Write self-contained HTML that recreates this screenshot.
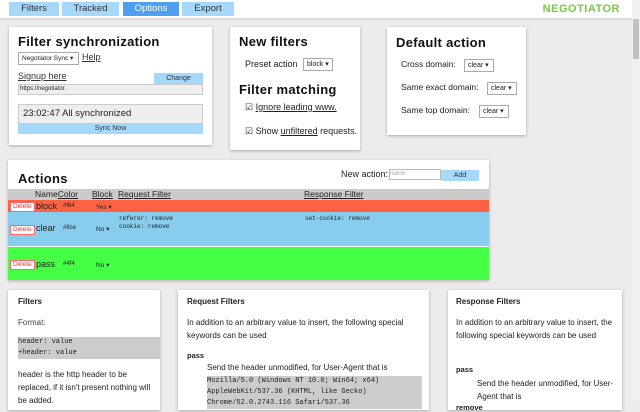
<!DOCTYPE html>
<html><head><style>
*{box-sizing:border-box;margin:0;padding:0}
body{width:640px;height:400px;overflow:hidden;background:#ececec;font-family:"Liberation Sans",sans-serif;font-size:9px;color:#222;position:relative}
.hdr{position:absolute;left:0;top:0;width:632px;height:18px;background:#fff;box-shadow:0 1px 2px #ccc}
.tab{position:absolute;top:2px;height:14px;background:#a6d8fb;color:#333;font-size:9.5px;text-align:center;line-height:14px}
.logo{position:absolute;right:12px;top:3px;color:#7ac943;font-weight:bold;font-size:11px;letter-spacing:.5px}
.card{position:absolute;background:#fff;box-shadow:0 1px 3px #aaa}
h2{font-size:13px;font-weight:bold;letter-spacing:.3px;color:#111}
h3{font-size:10px;font-weight:bold}
.sel{display:inline-block;border:1px solid #aaa;height:13px;font-size:7px;line-height:11px;padding:0 3px;background:#fff;position:absolute}
.btn{position:absolute;background:#a6d8fb;text-align:center;font-size:7px;line-height:12px;color:#333}
a{color:#333;text-decoration:underline}
.sb{position:absolute;left:632px;top:0;width:8px;height:400px;background:#f1f1f1}
.sb div{position:absolute;left:1px;top:19px;width:6px;height:40px;background:#c1c1c1}
.row{position:absolute;left:8px;width:481px}
.del{position:absolute;left:2px;background:#fff;border:1px solid #f66;color:#e33;font-size:6.5px;padding:0 2px;line-height:8px}
.mono{font-family:"Liberation Mono",monospace;font-size:7px}
.t{position:absolute}
</style></head><body>
<div class="hdr">
<div class="tab" style="left:9px;width:50px">Filters</div>
<div class="tab" style="left:62px;width:57px">Tracked</div>
<div class="tab" style="left:123px;width:56px;background:#4f9ff0;color:#fff">Options</div>
<div class="tab" style="left:182px;width:52px">Export</div>
<div class="logo">NEGOTIATOR</div>
</div>
<div class="sb"><div></div></div>

<div class="card" style="left:9px;top:27px;width:203px;height:118px">
<h2 class="t" style="left:9px;top:7px">Filter synchronization</h2>
<div class="sel" style="left:9px;top:25px;width:61px;font-size:6.5px">Negotiator Sync ▾</div>
<a class="t" style="left:73px;top:25px;font-size:9px">Help</a>
<a class="t" style="left:9px;top:44px;font-size:9px">Signup here</a>
<div class="btn" style="left:145px;top:46px;width:49px">Change</div>
<div class="t" style="left:9px;top:57px;width:185px;height:11px;background:#eee;border:1px solid #ccc;font-size:6px;line-height:9px;padding-left:1px">https://negotiator.</div>
<div class="t" style="left:9px;top:77px;width:185px;height:20px;background:#eee;border:1px solid #ccc;font-size:9.5px;line-height:18px;padding-left:4px">23:02:47 All synchronized</div>
<div class="btn" style="left:9px;top:97px;width:185px;height:10px;line-height:10px">Sync Now</div>
</div>

<div class="card" style="left:230px;top:27px;width:130px;height:123px">
<h2 class="t" style="left:9px;top:7px">New filters</h2>
<div class="t" style="left:15px;top:32px;font-size:9px">Preset action</div>
<div class="sel" style="left:73px;top:31px;width:30px">block ▾</div>
<h2 class="t" style="left:9px;top:55px">Filter matching</h2>
<div class="t" style="left:15px;top:75px;font-size:9px">☑ <u>Ignore leading www.</u></div>
<div class="t" style="left:15px;top:99px;font-size:9px">☑ Show <u>unfiltered</u> requests.</div>
</div>

<div class="card" style="left:387px;top:27px;width:139px;height:108px">
<h2 class="t" style="left:9px;top:8px">Default action</h2>
<div class="t" style="left:14px;top:32px;font-size:8.5px">Cross domain:</div>
<div class="sel" style="left:77px;top:32px;width:30px">clear ▾</div>
<div class="t" style="left:14px;top:55px;font-size:8.5px">Same exact domain:</div>
<div class="sel" style="left:100px;top:55px;width:30px">clear ▾</div>
<div class="t" style="left:14px;top:78px;font-size:8.5px">Same top domain:</div>
<div class="sel" style="left:92px;top:78px;width:30px">clear ▾</div>
</div>

<div class="card" style="left:8px;top:160px;width:481px;height:120px"></div>
<h2 class="t" style="left:18px;top:171px">Actions</h2>
<div class="t" style="left:341px;top:169px;font-size:9px">New action:</div>
<div class="t" style="left:389px;top:169px;width:52px;height:11px;border:1px solid #bbb;background:#fff;font-size:6px;color:#aaa;line-height:9px">name</div>
<div class="btn" style="left:441px;top:170px;width:38px;height:11px;line-height:11px">Add</div>
<div class="row" style="top:189px;height:11px;background:#cbcbcb;font-size:8.5px;line-height:11px">
<span class="t" style="left:27px">Name<u>Color</u></span><u class="t" style="left:84px">Block</u><u class="t" style="left:110px">Request Filter</u><u class="t" style="left:296px">Response Filter</u></div>
<div class="row" style="top:200px;height:12px;background:#ff6242">
<div class="del" style="top:2px">Delete</div><span class="t" style="left:28px;top:1px;font-size:9px">block</span><span class="t" style="left:55px;top:3px;font-size:6px">#f64</span><span class="t" style="left:88px;top:3px;font-size:6.5px">Yes ▾</span></div>
<div class="row" style="top:212px;height:34px;background:#88ccee">
<div class="del" style="top:13px">Delete</div><span class="t" style="left:28px;top:11px;font-size:9px">clear</span><span class="t" style="left:55px;top:13px;font-size:6px">#8ce</span><span class="t" style="left:88px;top:13px;font-size:6.5px">No ▾</span>
<div class="t mono" style="left:111px;top:3px;font-size:6px;line-height:8px">referer: remove<br>cookie: remove</div>
<div class="t mono" style="left:297px;top:3px;font-size:6px">set-cookie: remove</div></div>
<div class="row" style="top:247px;height:33px;background:#44ff44">
<div class="del" style="top:13px">Delete</div><span class="t" style="left:28px;top:12px;font-size:9px">pass</span><span class="t" style="left:55px;top:14px;font-size:6px">#4f4</span><span class="t" style="left:88px;top:14px;font-size:6.5px">No ▾</span></div>

<div class="card" style="left:8px;top:290px;width:152px;height:120px">
<h3 class="t" style="left:10px;top:7px;font-size:8px">Filters</h3>
<div class="t" style="left:10px;top:28px;font-size:8px;color:#444">Format:</div>
<div class="t mono" style="left:10px;top:47px;width:142px;background:#ccc;line-height:11px;font-size:7px">header: value<br>+header: value</div>
<div class="t" style="left:10px;top:78px;width:140px;font-size:8px;line-height:13px">header is the http header to be replaced, if it isn't present nothing will be added.</div>
</div>
<div class="card" style="left:178px;top:290px;width:251px;height:120px">
<h3 class="t" style="left:9px;top:7px;font-size:8px">Request Filters</h3>
<div class="t" style="left:9px;top:26px;width:235px;font-size:8px;line-height:13px">In addition to an arbitrary value to insert, the following special keywords can be used</div>
<b class="t" style="left:9px;top:61px;font-size:7.5px">pass</b>
<div class="t" style="left:29px;top:73px;font-size:8px">Send the header unmodified, for User-Agent that is</div>
<div class="t mono" style="left:29px;top:86px;width:215px;background:#ccc;line-height:11px;font-size:7px">Mozilla/5.0 (Windows NT 10.0; Win64; x64)<br>AppleWebKit/537.36 (KHTML, like Gecko)<br>Chrome/52.0.2743.116 Safari/537.36</div>
</div>
<div class="card" style="left:448px;top:290px;width:174px;height:120px">
<h3 class="t" style="left:8px;top:7px;font-size:8px">Response Filters</h3>
<div class="t" style="left:8px;top:26px;width:160px;font-size:8px;line-height:13px">In addition to an arbitrary value to insert, the following special keywords can be used</div>
<b class="t" style="left:8px;top:75px;font-size:7.5px">pass</b>
<div class="t" style="left:29px;top:87px;width:140px;font-size:8px;line-height:13px">Send the header unmodified, for User-Agent that is</div>
<b class="t" style="left:8px;top:113px;font-size:7.5px">remove</b>
</div>
</body></html>
